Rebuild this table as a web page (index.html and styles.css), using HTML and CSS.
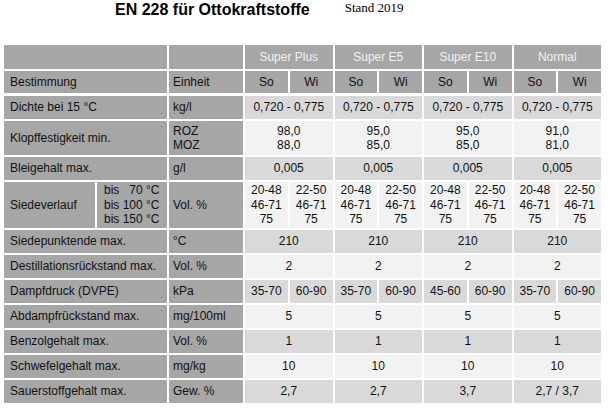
FILE: index.html
```html
<!DOCTYPE html>
<html lang="de">
<head>
<meta charset="utf-8">
<title>EN 228 für Ottokraftstoffe</title>
<link rel="stylesheet" href="styles.css">
</head>
<body>
<div class="top">
  <h1 class="title">EN 228 für Ottokraftstoffe</h1>
  <div class="stand">Stand 2019</div>
</div>
<table class="spec">
  <colgroup>
    <col class="c1a"><col class="c1b"><col class="c2">
    <col class="cd"><col class="cd"><col class="cd"><col class="cd">
    <col class="cd"><col class="cd"><col class="cd"><col class="cd">
  </colgroup>
  <thead>
    <tr class="h1">
      <th colspan="2" class="lab"></th>
      <th class="lab"></th>
      <th colspan="2" class="fuel">Super Plus</th>
      <th colspan="2" class="fuel">Super E5</th>
      <th colspan="2" class="fuel">Super E10</th>
      <th colspan="2" class="fuel">Normal</th>
    </tr>
    <tr class="h2">
      <th colspan="2" class="lab name">Bestimmung</th>
      <th class="lab unit">Einheit</th>
      <th class="sw">So</th><th class="sw">Wi</th>
      <th class="sw">So</th><th class="sw">Wi</th>
      <th class="sw">So</th><th class="sw">Wi</th>
      <th class="sw">So</th><th class="sw">Wi</th>
    </tr>
  </thead>
  <tbody>
    <tr class="r dark">
      <td colspan="2" class="lab name">Dichte bei 15 °C</td>
      <td class="lab unit">kg/l</td>
      <td colspan="2" class="v">0,720 - 0,775</td>
      <td colspan="2" class="v">0,720 - 0,775</td>
      <td colspan="2" class="v">0,720 - 0,775</td>
      <td colspan="2" class="v">0,720 - 0,775</td>
    </tr>
    <tr class="r2 light">
      <td colspan="2" class="lab name">Klopffestigkeit min.</td>
      <td class="lab unit">ROZ<br>MOZ</td>
      <td colspan="2" class="v">98,0<br>88,0</td>
      <td colspan="2" class="v">95,0<br>85,0</td>
      <td colspan="2" class="v">95,0<br>85,0</td>
      <td colspan="2" class="v">91,0<br>81,0</td>
    </tr>
    <tr class="r dark">
      <td colspan="2" class="lab name">Bleigehalt max.</td>
      <td class="lab unit">g/l</td>
      <td colspan="2" class="v">0,005</td>
      <td colspan="2" class="v">0,005</td>
      <td colspan="2" class="v">0,005</td>
      <td colspan="2" class="v">0,005</td>
    </tr>
    <tr class="r3 light">
      <td class="lab name">Siedeverlauf</td>
      <td class="lab sub">bis&nbsp;&nbsp;&nbsp;70 °C<br>bis 100 °C<br>bis 150 °C</td>
      <td class="lab unit">Vol. %</td>
      <td class="v">20-48<br>46-71<br>75</td><td class="v">22-50<br>46-71<br>75</td>
      <td class="v">20-48<br>46-71<br>75</td><td class="v">22-50<br>46-71<br>75</td>
      <td class="v">20-48<br>46-71<br>75</td><td class="v">22-50<br>46-71<br>75</td>
      <td class="v">20-48<br>46-71<br>75</td><td class="v">22-50<br>46-71<br>75</td>
    </tr>
    <tr class="r dark">
      <td colspan="2" class="lab name">Siedepunktende max.</td>
      <td class="lab unit">°C</td>
      <td colspan="2" class="v">210</td>
      <td colspan="2" class="v">210</td>
      <td colspan="2" class="v">210</td>
      <td colspan="2" class="v">210</td>
    </tr>
    <tr class="r light">
      <td colspan="2" class="lab name">Destillationsrückstand max.</td>
      <td class="lab unit">Vol. %</td>
      <td colspan="2" class="v">2</td>
      <td colspan="2" class="v">2</td>
      <td colspan="2" class="v">2</td>
      <td colspan="2" class="v">2</td>
    </tr>
    <tr class="r dark">
      <td colspan="2" class="lab name">Dampfdruck (DVPE)</td>
      <td class="lab unit">kPa</td>
      <td class="v">35-70</td><td class="v">60-90</td>
      <td class="v">35-70</td><td class="v">60-90</td>
      <td class="v">45-60</td><td class="v">60-90</td>
      <td class="v">35-70</td><td class="v">60-90</td>
    </tr>
    <tr class="r light">
      <td colspan="2" class="lab name">Abdampfrückstand max.</td>
      <td class="lab unit">mg/100ml</td>
      <td colspan="2" class="v">5</td>
      <td colspan="2" class="v">5</td>
      <td colspan="2" class="v">5</td>
      <td colspan="2" class="v">5</td>
    </tr>
    <tr class="r dark">
      <td colspan="2" class="lab name">Benzolgehalt max.</td>
      <td class="lab unit">Vol. %</td>
      <td colspan="2" class="v">1</td>
      <td colspan="2" class="v">1</td>
      <td colspan="2" class="v">1</td>
      <td colspan="2" class="v">1</td>
    </tr>
    <tr class="r light">
      <td colspan="2" class="lab name">Schwefelgehalt max.</td>
      <td class="lab unit">mg/kg</td>
      <td colspan="2" class="v">10</td>
      <td colspan="2" class="v">10</td>
      <td colspan="2" class="v">10</td>
      <td colspan="2" class="v">10</td>
    </tr>
    <tr class="r dark">
      <td colspan="2" class="lab name">Sauerstoffgehalt max.</td>
      <td class="lab unit">Gew. %</td>
      <td colspan="2" class="v">2,7</td>
      <td colspan="2" class="v">2,7</td>
      <td colspan="2" class="v">3,7</td>
      <td colspan="2" class="v">2,7 / 3,7</td>
    </tr>
  </tbody>
</table>
</body>
</html>
```
FILE: styles.css
```css
body {
  margin: 0;
  background: #ffffff;
  color: #111111;
  font-family: "Liberation Sans", Arial, sans-serif;
  font-size: 12px;
}

.top {
  display: flex;
  align-items: flex-start;
  gap: 35px;
  height: 43px;
  padding-left: 115px;
}

.title {
  margin: 1px 0 0;
  font-size: 16px;
  line-height: 18px;
  font-weight: bold;
  color: #000000;
}

.stand {
  font-family: "Liberation Serif", "Times New Roman", serif;
  font-size: 13px;
  line-height: 15px;
  color: #000000;
}

.spec {
  margin-left: 2px;
  width: 601px;
  table-layout: fixed;
  border-collapse: separate;
  border-spacing: 2px;
}

.c1a { width: 91px; }
.c1b { width: 70px; }
.c2 { width: 74px; }

.spec th,
.spec td {
  padding: 0;
  font-weight: normal;
  line-height: 14.5px;
  vertical-align: middle;
  white-space: nowrap;
  overflow: hidden;
}

.h1 { height: 24px; }
.h2 { height: 23px; }
.r { height: 23px; }
.r2 { height: 34px; }
.r3 { height: 46px; }

.spec .lab {
  background: #a6a6a6;
  text-align: left;
}

.spec .name { padding-left: 6px; padding-right: 2px; }
.spec .sub { padding-left: 7px; }
.spec .unit { padding-left: 4px; }

.spec .fuel {
  background: #a6a6a6;
  color: #f2f2f2;
  text-align: center;
}

.spec .sw {
  background: #a6a6a6;
  text-align: center;
}

.spec .h2 th {
  border-bottom: 1px solid #ffffff;
}

.spec .v { text-align: center; }
.dark .v { background: #d9d9d9; }
.light .v { background: #f2f2f2; }
```
